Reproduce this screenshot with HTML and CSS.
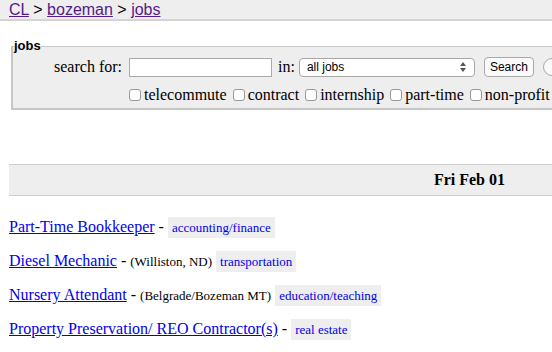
FILE: index.html
```html
<!DOCTYPE html>
<html lang="en">
  <head>
    <meta charset="UTF-8" />
    <title>bozeman jobs</title>
    <link rel="stylesheet" href="styles.css">
  </head>
  <body>
    <div class="bchead">
      <a href="#">CL</a> &gt; <a href="#">bozeman</a> &gt; <a href="#">jobs</a>
    </div>

    <form class="search">
      <fieldset>
        <legend>jobs</legend>
        <div class="grid">
          <label class="lbl" for="query">search for:</label>
          <div class="line">
            <input type="text" id="query" class="query">
            <span class="in">in:</span>
            <div class="select">
              all jobs
              <svg class="arrows" width="6" height="10" viewBox="0 0 6 10">
                <path d="M0 4 L3 0 L6 4 Z M0 6 L3 10 L6 6 Z" fill="#555" />
              </svg>
            </div>
            <button type="button" class="btn">Search</button>
            <span class="knob"></span>
          </div>
          <div></div>
          <div class="line checks">
            <label><input type="checkbox">telecommute</label>
            <label><input type="checkbox">contract</label>
            <label><input type="checkbox">internship</label>
            <label><input type="checkbox">part-time</label>
            <label><input type="checkbox">non-profit</label>
          </div>
        </div>
      </fieldset>
    </form>

    <h4 class="ban">Fri Feb 01</h4>

    <div class="rows">
      <p class="row"><a href="#">Part-Time Bookkeeper</a> - <span class="cat">accounting/finance</span></p>
      <p class="row"><a href="#">Diesel Mechanic</a> - <small>(Williston, ND)</small> <span class="cat">transportation</span></p>
      <p class="row"><a href="#">Nursery Attendant</a> - <small>(Belgrade/Bozeman MT)</small> <span class="cat">education/teaching</span></p>
      <p class="row"><a href="#">Property Preservation/ REO Contractor(s)</a> - <span class="cat">real estate</span></p>
    </div>
  </body>
</html>
```

FILE: styles.css
```css
html {
  overflow-x: hidden;
}

body {
  margin: 0;
  font-family: "Liberation Serif", "Times New Roman", serif;
  font-size: 16px;
  color: #000;
  background: #fff;
}

a {
  color: #00e;
}

.bchead {
  height: 19px;
  padding-left: 9px;
  background: #eee;
  border-bottom: 2px solid #d4d4d4;
  font-family: "Liberation Sans", Arial, sans-serif;
  font-size: 16px;
  line-height: 19px;
  white-space: nowrap;
}

.bchead a {
  color: #551a8b;
}

.search {
  margin: 18px 0 0 11px;
}

fieldset {
  width: 600px;
  margin: 0;
  padding: 4px 0 4px 0;
  border: 1px solid #c6c6c6;
  border-width: 1px 1px 2px 2px;
  background: #eee;
}

legend {
  padding: 0;
  margin-left: 1px;
  font-family: "Liberation Sans", Arial, sans-serif;
  font-size: 13px;
  font-weight: bold;
  line-height: 14px;
}

.grid {
  display: grid;
  grid-template-columns: 116px auto;
  row-gap: 9px;
  align-items: center;
}

.lbl {
  text-align: right;
  padding-right: 7px;
}

.line {
  display: flex;
  align-items: center;
  white-space: nowrap;
}

.query {
  width: 139px;
  height: 15px;
  margin: 0;
  padding: 1px;
  border: 1px solid #aaa;
  background: #fff;
}

.in {
  margin: 0 4px 0 6px;
}

.select {
  display: flex;
  justify-content: space-between;
  align-items: center;
  box-sizing: border-box;
  width: 176px;
  height: 19px;
  padding: 0 8px 0 7px;
  border: 1px solid #a8a8a8;
  border-radius: 4px;
  background: #fff;
  font-family: "Liberation Sans", Arial, sans-serif;
  font-size: 12px;
}

.btn {
  box-sizing: border-box;
  width: 50px;
  height: 20px;
  margin-left: 9px;
  padding: 0;
  border: 1px solid #a8a8a8;
  border-radius: 4px;
  background: #fafafa;
  font-family: "Liberation Sans", Arial, sans-serif;
  font-size: 12px;
}

.knob {
  flex: none;
  width: 16px;
  height: 16px;
  margin-left: 9px;
  border: 1px solid #a8a8a8;
  border-radius: 50%;
  background: #fafafa;
}

.checks label {
  display: flex;
  align-items: center;
  margin-right: 6px;
}

.checks input {
  appearance: none;
  width: 12px;
  height: 12px;
  margin: 0 3px 0 0;
  border: 1px solid #999;
  border-radius: 3px;
  background: #fff;
}

.ban {
  margin: 54px 0 0 9px;
  padding: 0 47px 0 0;
  height: 30px;
  line-height: 30px;
  border-top: 1px solid #ccc;
  border-bottom: 1px solid #ccc;
  background: #eee;
  text-align: right;
  font-size: 16px;
}

.rows {
  margin: 14px 0 0 9px;
}

.row {
  margin: 0;
  height: 34px;
  line-height: 34px;
  white-space: nowrap;
}

.row small {
  font-size: 13px;
}

.cat {
  padding: 3px 4px;
  background: #eee;
  color: #00e;
  font-size: 13px;
}
```
